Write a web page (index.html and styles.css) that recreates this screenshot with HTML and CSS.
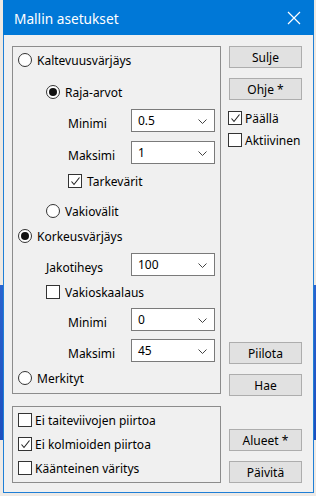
FILE: index.html
```html
<!DOCTYPE html>
<html lang="fi">
<head>
    <meta charset="UTF-8">
    <meta name="viewport" content="width=device-width, initial-scale=1.0">
    <title>Mallin asetukset</title>
    <link rel="stylesheet" href="styles.css">
</head>
<body>
    <div class="ikkuna">
        <div class="otsikko">
            <span class="otsikko-teksti">Mallin asetukset</span>
            <svg class="sulje-x" width="14" height="14" viewBox="0 0 14 14">
                <path d="M1 1 L13 13 M13 1 L1 13" stroke="#fff" stroke-width="1.2" fill="none"/>
            </svg>
        </div>

        <div class="sisalto">
            <div class="vasen">
                <div class="ryhma ryhma-yla">
                    <div class="rivi taso0">
                        <span class="radio"></span><span class="teksti">Kaltevuusvärjäys</span>
                    </div>
                    <div class="rivi taso1 vali-iso">
                        <span class="radio valittu"></span><span class="teksti">Raja-arvot</span>
                    </div>
                    <div class="rivi-valinta">
                        <span class="nimi taso2">Minimi</span>
                        <div class="valikko"><span>0.5</span><svg class="nuoli" width="9" height="5" viewBox="0 0 9 5"><polyline points="0.5,0.5 4.5,4.5 8.5,0.5" fill="none" stroke="#444" stroke-width="1"/></svg></div>
                    </div>
                    <div class="rivi-valinta">
                        <span class="nimi taso2">Maksimi</span>
                        <div class="valikko"><span>1</span><svg class="nuoli" width="9" height="5" viewBox="0 0 9 5"><polyline points="0.5,0.5 4.5,4.5 8.5,0.5" fill="none" stroke="#444" stroke-width="1"/></svg></div>
                    </div>
                    <div class="rivi taso2">
                        <span class="ruutu"><svg width="11" height="11" viewBox="0 0 11 11"><polyline points="1.5,5.5 4,8.5 9.5,1.5" fill="none" stroke="#222" stroke-width="1.1"/></svg></span><span class="teksti">Tarkevärit</span>
                    </div>
                    <div class="rivi taso1 vali-keski">
                        <span class="radio"></span><span class="teksti">Vakiovälit</span>
                    </div>
                    <div class="rivi taso0">
                        <span class="radio valittu"></span><span class="teksti">Korkeusvärjäys</span>
                    </div>
                    <div class="rivi-valinta">
                        <span class="nimi taso1">Jakotiheys</span>
                        <div class="valikko"><span>100</span><svg class="nuoli" width="9" height="5" viewBox="0 0 9 5"><polyline points="0.5,0.5 4.5,4.5 8.5,0.5" fill="none" stroke="#444" stroke-width="1"/></svg></div>
                    </div>
                    <div class="rivi taso1 vali-pieni">
                        <span class="ruutu"></span><span class="teksti">Vakioskaalaus</span>
                    </div>
                    <div class="rivi-valinta vali-pieni">
                        <span class="nimi taso2">Minimi</span>
                        <div class="valikko"><span>0</span><svg class="nuoli" width="9" height="5" viewBox="0 0 9 5"><polyline points="0.5,0.5 4.5,4.5 8.5,0.5" fill="none" stroke="#444" stroke-width="1"/></svg></div>
                    </div>
                    <div class="rivi-valinta vali-pieni">
                        <span class="nimi taso2">Maksimi</span>
                        <div class="valikko"><span>45</span><svg class="nuoli" width="9" height="5" viewBox="0 0 9 5"><polyline points="0.5,0.5 4.5,4.5 8.5,0.5" fill="none" stroke="#444" stroke-width="1"/></svg></div>
                    </div>
                    <div class="rivi taso0 vali-pieni">
                        <span class="radio"></span><span class="teksti">Merkityt</span>
                    </div>
                </div>

                <div class="ryhma ryhma-ala">
                    <div class="rivi">
                        <span class="ruutu"></span><span class="teksti-lahella">Ei taiteviivojen piirtoa</span>
                    </div>
                    <div class="rivi">
                        <span class="ruutu"><svg width="11" height="11" viewBox="0 0 11 11"><polyline points="1.5,5.5 4,8.5 9.5,1.5" fill="none" stroke="#222" stroke-width="1.1"/></svg></span><span class="teksti-lahella">Ei kolmioiden piirtoa</span>
                    </div>
                    <div class="rivi">
                        <span class="ruutu"></span><span class="teksti-lahella">Käänteinen väritys</span>
                    </div>
                </div>
            </div>

            <div class="oikea">
                <div class="napit-yla">
                    <div class="nappi">Sulje</div>
                    <div class="nappi">Ohje *</div>
                    <div class="rivi valinta-paalla">
                        <span class="ruutu"><svg width="11" height="11" viewBox="0 0 11 11"><polyline points="1.5,5.5 4,8.5 9.5,1.5" fill="none" stroke="#222" stroke-width="1.1"/></svg></span><span class="teksti-lahella">Päällä</span>
                    </div>
                    <div class="rivi valinta-akt">
                        <span class="ruutu"></span><span class="teksti-lahella">Aktiivinen</span>
                    </div>
                </div>
                <div class="napit-ala">
                    <div class="nappi">Piilota</div>
                    <div class="nappi">Hae</div>
                    <div class="nappi nappi-erotus">Alueet *</div>
                    <div class="nappi">Päivitä</div>
                </div>
            </div>
        </div>
    </div>
</body>
</html>
```

FILE: styles.css
```css
body {
    margin: 0;
    width: 316px;
    height: 496px;
    overflow: hidden;
    font-family: "Noto Sans", "Open Sans", sans-serif;
    font-size: 12px;
    color: #000;
    background: linear-gradient(to bottom, #eee9e3 0, #eee9e3 285px, #2a63cf 285px, #1d4fbf 440px, #eeeae6 440px);
}
.ikkuna {
    margin-left: 3px;
    width: 311px;
    height: 493px;
    box-sizing: border-box;
    border: 1px solid #1f7fd6;
    border-top: none;
    background-color: #f0f0f0;
    display: flex;
    flex-direction: column;
}
.otsikko {
    height: 35px;
    margin: 0 -1px;
    background-color: #0078d7;
    color: #fff;
    display: flex;
    align-items: center;
    justify-content: space-between;
    padding: 0 13px 0 11px;
    flex-shrink: 0;
}
.otsikko-teksti {
    font-size: 13.7px;
    margin-top: 1px;
}
.sisalto {
    flex: 1;
    display: flex;
    padding: 11px 0 9px 8px;
}
.vasen {
    width: 209px;
    display: flex;
    flex-direction: column;
}
.ryhma {
    border: 1px solid #8c8c8c;
    box-sizing: border-box;
    display: flex;
    flex-direction: column;
    gap: 9px;
}
.ryhma-yla {
    height: 348px;
    padding-top: 5px;
}
.ryhma-ala {
    height: 77px;
    margin-top: 12px;
    padding: 5px 0 0 5px;
    gap: 8px;
}
.rivi {
    height: 16px;
    display: flex;
    align-items: center;
}
.taso0 { padding-left: 5px; }
.taso1 { padding-left: 33px; }
.taso2 { padding-left: 55px; }
.vali-iso { margin-top: 7px; }
.vali-keski { margin-top: 5px; }
.vali-pieni { margin-top: -1px; }
.radio {
    width: 14px;
    height: 14px;
    box-sizing: border-box;
    border: 1px solid #333;
    border-radius: 50%;
    background-color: #fff;
    position: relative;
    flex-shrink: 0;
}
.radio.valittu::after {
    content: "";
    position: absolute;
    left: 2px;
    top: 2px;
    width: 8px;
    height: 8px;
    border-radius: 50%;
    background-color: #111;
}
.ruutu {
    width: 14px;
    height: 14px;
    box-sizing: border-box;
    border: 1px solid #333;
    background-color: #fff;
    display: flex;
    align-items: center;
    justify-content: center;
    flex-shrink: 0;
}
.teksti {
    margin-left: 5px;
}
.teksti-lahella {
    margin-left: 3px;
}
.rivi-valinta {
    height: 23px;
    display: flex;
    align-items: flex-end;
}
.nimi {
    width: 62px;
    line-height: 16px;
}
.nimi.taso1 {
    width: 84px;
}
.valikko {
    margin-left: auto;
    margin-right: 5px;
    width: 84px;
    height: 23px;
    box-sizing: border-box;
    border: 1px solid #7a7a7a;
    background-color: #fff;
    display: flex;
    align-items: center;
    justify-content: space-between;
    padding: 0 7px 0 6px;
}
.nuoli {
    margin-top: 1px;
}
.oikea {
    width: 73px;
    margin-left: 8px;
    display: flex;
    flex-direction: column;
    justify-content: space-between;
}
.napit-yla, .napit-ala {
    display: flex;
    flex-direction: column;
    gap: 10px;
}
.nappi {
    height: 22px;
    box-sizing: border-box;
    border: 1px solid #adadad;
    background-color: #e1e1e1;
    display: flex;
    align-items: center;
    justify-content: center;
}
.nappi-erotus {
    margin-top: 23px;
}
.valinta-paalla {
    margin-left: -1px;
}
.valinta-akt {
    margin-top: -4px;
    margin-left: -1px;
}
```
